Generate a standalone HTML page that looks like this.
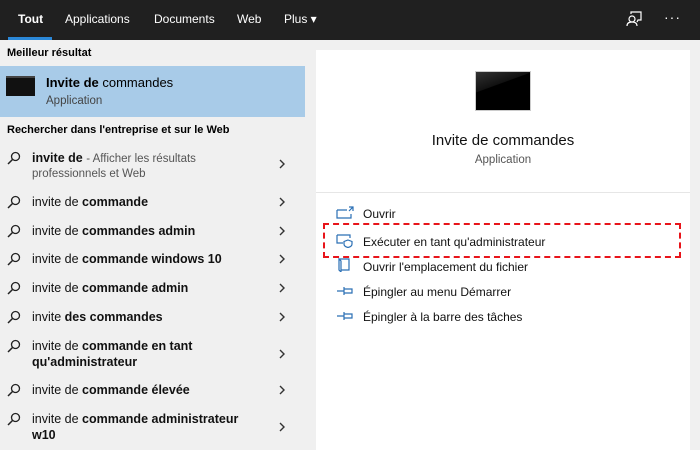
<!DOCTYPE html>
<html><head><meta charset="utf-8"><style>
*{margin:0;padding:0;box-sizing:border-box}
body{width:700px;height:450px;overflow:hidden;background:#f0f0f0;font-family:"Liberation Sans",sans-serif;position:relative;color:#000}
.top{position:absolute;left:0;top:0;width:700px;height:40px;background:#202020;color:#fff;font-size:12px}
.top span{position:absolute;top:12px}
.ul{position:absolute;left:8px;top:37px;width:44px;height:3px;background:#2b88d8}
.a{position:absolute;font-size:12px;white-space:nowrap}
.hd{font-weight:bold;font-size:11px;left:7px}
.sel{position:absolute;left:0;top:66px;width:305px;height:51px;background:#a8cbe8}
.r{position:absolute;left:32px;font-size:12.5px;white-space:nowrap;color:#111}
.r b{font-weight:bold}
.mag{position:absolute;left:7px;width:14px;height:14px}
.chev{position:absolute;left:278px;width:8px;height:10px}
.rp{position:absolute;left:316px;top:50px;width:374px;height:400px;background:#fff}
.act{position:absolute;left:363px;font-size:12px;color:#111;white-space:nowrap}
.ic{position:absolute;left:336px;width:18px;height:14px}
</style></head><body>
<div class="top">
<span style="left:18px;font-weight:bold">Tout</span>
<span style="left:65px">Applications</span>
<span style="left:154px">Documents</span>
<span style="left:237px">Web</span>
<span style="left:284px">Plus ▾</span>
<svg style="position:absolute;left:626px;top:11px" width="17" height="16" viewBox="0 0 17 16" fill="none" stroke="#fff" stroke-width="1.2"><circle cx="6" cy="8" r="3"/><path d="M1 15c0-3 2-4 5-4s5 1 5 4M5 3V1h10v8h-3l-1 2"/></svg>
<span style="left:664px;top:9px;font-size:14px;letter-spacing:1px">···</span>
</div>
<div class="ul"></div>
<div class="a hd" style="top:47px">Meilleur résultat</div>
<div class="sel"></div>
<div style="position:absolute;left:6px;top:76px;width:29px;height:20px;background:#111;border-top:2px solid #444"></div>
<div class="a" style="left:46px;top:75px;font-size:13px"><b>Invite de</b> commandes</div>
<div class="a" style="left:46px;top:95px;font-size:11.5px;color:#444">Application</div>
<div class="a hd" style="top:124px">Rechercher dans l'entreprise et sur le Web</div>

<div class="r" style="top:151px"><b>invite de</b> <span style="color:#555;font-size:11.5px">- Afficher les résultats</span></div>
<div class="r" style="top:168px;color:#555;font-size:11.5px">professionnels et Web</div>
<div class="r" style="top:195px">invite de <b>commande</b></div>
<div class="r" style="top:224px">invite de <b>commandes admin</b></div>
<div class="r" style="top:252px">invite de <b>commande windows 10</b></div>
<div class="r" style="top:281px">invite de <b>commande admin</b></div>
<div class="r" style="top:310px">invite <b>des commandes</b></div>
<div class="r" style="top:339px">invite de <b>commande en tant</b></div>
<div class="r" style="top:355px"><b>qu'administrateur</b></div>
<div class="r" style="top:383px">invite de <b>commande élevée</b></div>
<div class="r" style="top:412px">invite de <b>commande administrateur</b></div>
<div class="r" style="top:428px"><b>w10</b></div>

<svg width="0" height="0" style="position:absolute"><defs>
<symbol id="m" viewBox="0 0 14 14"><circle cx="8.5" cy="5.5" r="4" fill="none" stroke="#222" stroke-width="1.3"/><path d="M5.5 8.5L1 13" stroke="#222" stroke-width="1.5"/></symbol>
<symbol id="c" viewBox="0 0 8 10"><path d="M2 1l4 4-4 4" fill="none" stroke="#333" stroke-width="1.4"/></symbol>
</defs></svg>
<svg class="mag" style="top:151px"><use href="#m"/></svg>
<svg class="mag" style="top:195px"><use href="#m"/></svg>
<svg class="mag" style="top:224px"><use href="#m"/></svg>
<svg class="mag" style="top:252px"><use href="#m"/></svg>
<svg class="mag" style="top:281px"><use href="#m"/></svg>
<svg class="mag" style="top:310px"><use href="#m"/></svg>
<svg class="mag" style="top:339px"><use href="#m"/></svg>
<svg class="mag" style="top:383px"><use href="#m"/></svg>
<svg class="mag" style="top:412px"><use href="#m"/></svg>
<svg class="chev" style="top:159px"><use href="#c"/></svg>
<svg class="chev" style="top:197px"><use href="#c"/></svg>
<svg class="chev" style="top:226px"><use href="#c"/></svg>
<svg class="chev" style="top:254px"><use href="#c"/></svg>
<svg class="chev" style="top:283px"><use href="#c"/></svg>
<svg class="chev" style="top:312px"><use href="#c"/></svg>
<svg class="chev" style="top:349px"><use href="#c"/></svg>
<svg class="chev" style="top:385px"><use href="#c"/></svg>
<svg class="chev" style="top:422px"><use href="#c"/></svg>

<div class="rp"></div>
<div style="position:absolute;left:475px;top:71px;width:56px;height:40px;background:linear-gradient(160deg,#333 0%,#111 35%,#000 36%);border:1px solid #ccc"></div>
<div class="a" style="left:316px;width:374px;text-align:center;top:132px;font-size:15px;color:#111">Invite de commandes</div>
<div class="a" style="left:316px;width:374px;text-align:center;top:154px;font-size:11.5px;color:#555">Application</div>
<div style="position:absolute;left:316px;top:192px;width:374px;height:1px;background:#e6e6e6"></div>

<svg class="ic" style="top:206px" viewBox="0 0 18 14" fill="none" stroke="#2a6fb5" stroke-width="1.2"><path d="M1 4h10M1 4v8h14V8M13 1h4v4M17 1l-4 4"/></svg>
<div class="act" style="top:207px">Ouvrir</div>
<div style="position:absolute;left:323px;top:223px;width:358px;height:35px;border:2.5px dashed #e8141a"></div>
<svg class="ic" style="top:234px" viewBox="0 0 18 14" fill="none" stroke="#2a6fb5" stroke-width="1.2"><path d="M1 1h13v3M1 1v8h6"/><path d="M12 6l4 1.5v2.5c0 2-2 3-4 3.5-2-.5-4-1.5-4-3.5V7.5z"/></svg>
<div class="act" style="top:235px">Exécuter en tant qu'administrateur</div>
<svg class="ic" style="top:258px" viewBox="0 0 18 14" fill="none" stroke="#2a6fb5" stroke-width="1.2"><path d="M3 1h10v11H5M3 1v11l2 2V3z"/></svg>
<div class="act" style="top:260px">Ouvrir l'emplacement du fichier</div>
<svg class="ic" style="top:284px" viewBox="0 0 18 14" fill="none" stroke="#2a6fb5" stroke-width="1.2"><path d="M1 7h7M8 3v8M8 5h8v4H8"/></svg>
<div class="act" style="top:285px">Épingler au menu Démarrer</div>
<svg class="ic" style="top:309px" viewBox="0 0 18 14" fill="none" stroke="#2a6fb5" stroke-width="1.2"><path d="M1 7h7M8 3v8M8 5h8v4H8"/></svg>
<div class="act" style="top:310px">Épingler à la barre des tâches</div>
</body></html>
